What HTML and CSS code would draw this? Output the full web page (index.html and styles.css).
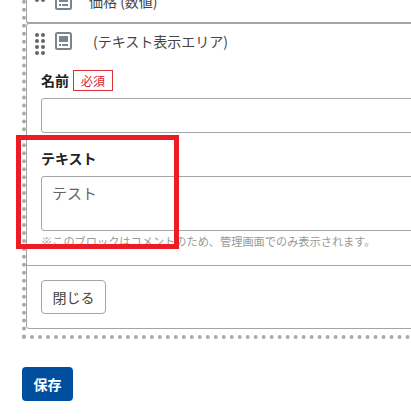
FILE: index.html
```html
<!DOCTYPE html>
<html lang="ja">
<head>
<meta charset="utf-8">
<title>ブロック編集</title>
<link rel="stylesheet" href="styles.css">
</head>
<body>
<div class="page">
  <div class="area">
    <div class="card card-first">
      <div class="head">
        <svg class="grip" width="10" height="18" viewBox="0 0 10 18"><g fill="#666"><circle cx="2" cy="2" r="2"/><circle cx="8" cy="2" r="2"/><circle cx="2" cy="8" r="2"/><circle cx="8" cy="8" r="2"/></g></svg>
        <svg class="ico" width="17" height="18" viewBox="0 0 17 18"><rect x="1" y="1" width="15" height="16" rx="1.5" fill="none" stroke="#7b8590" stroke-width="2"/><rect x="4" y="4" width="9" height="6" fill="#7b8590"/><rect x="4" y="12" width="2" height="2" fill="#7b8590"/><rect x="7" y="12" width="6" height="2" fill="#7b8590"/></svg>
        <span class="title">価格 (数値)</span>
      </div>
    </div>
    <div class="card card-open">
      <div class="head">
        <svg class="grip" width="10" height="24" viewBox="0 0 10 24"><g fill="#666"><circle cx="2" cy="3" r="2"/><circle cx="8" cy="3" r="2"/><circle cx="2" cy="9" r="2"/><circle cx="8" cy="9" r="2"/><circle cx="2" cy="15" r="2"/><circle cx="8" cy="15" r="2"/><circle cx="2" cy="21" r="2"/><circle cx="8" cy="21" r="2"/></g></svg>
        <svg class="ico" width="17" height="18" viewBox="0 0 17 18"><rect x="1" y="1" width="15" height="16" rx="1.5" fill="none" stroke="#7b8590" stroke-width="2"/><rect x="4" y="4" width="9" height="6" fill="#7b8590"/><rect x="4" y="12" width="2" height="2" fill="#7b8590"/><rect x="7" y="12" width="6" height="2" fill="#7b8590"/></svg>
        <span class="title">(テキスト表示エリア)</span>
      </div>
      <div class="body">
        <div class="label-row"><span class="label">名前</span><span class="badge">必須</span></div>
        <div class="field field-input"></div>
        <div class="label label-text">テキスト</div>
        <div class="field field-area">テスト</div>
        <p class="note">※このブロックはコメントのため、管理画面でのみ表示されます。</p>
      </div>
      <div class="foot"><span class="btn">閉じる</span></div>
    </div>
  </div>
  <div class="actions"><span class="save">保存</span></div>
  <div class="mark"></div>
</div>
</body>
</html>
```
FILE: styles.css
```css
* { box-sizing: border-box; }
html, body { margin: 0; padding: 0; background: #fff; }
body { font-family: "Noto Sans CJK JP", "Noto Sans", sans-serif; color: #333; }
.page { position: relative; width: 411px; height: 419px; overflow: hidden; }
.area { width: 620px; margin-left: 22px; margin-top: -32px; border-left: 4px dotted #aaa; border-bottom: 4px dotted #aaa; padding-bottom: 6px; }
.card { border: 1px solid #a5a5a5; border-radius: 3px; background: #fff; }
.card-first { height: 56px; border-bottom-width: 2px; }
.card-first .head { padding-top: 23px; }
.card-open { margin-top: -1px; height: 306px; }
.head { display: flex; align-items: flex-start; padding: 8px 0 0 8px; }
.grip { flex: none; margin-right: 10px; }
.ico { flex: none; margin-right: 21px; }
.title { font-size: 14px; line-height: 20px; color: #444; margin-top: -1px; }
.card-first .title { margin-left: -4px; }
.body { padding: 14px 0 0 14px; }
.label-row { display: flex; align-items: center; height: 21px; gap: 4px; }
.label { font-size: 14px; font-weight: 700; line-height: 21px; color: #222; }
.badge { width: 40px; height: 21px; border: 1px solid #d9303a; font-size: 12px; line-height: 19px; text-align: center; color: #e0202c; }
.field { border: 1px solid #a5a5a5; border-radius: 3px; background: #fff; width: 560px; }
.field-input { height: 35px; margin-top: 7px; }
.label-text { margin-top: 15px; line-height: 21px; }
.field-area { height: 55px; margin-top: 7px; padding: 5px 10px; font-size: 15px; line-height: 21px; color: #666; }
.note { margin: 2px 0 0; font-size: 11.2px; line-height: 17px; color: #999; }
.foot { margin-top: 15px; border-top: 1px solid #a5a5a5; padding: 14px 0 0 14px; }
.btn { display: block; width: 65px; height: 34px; border: 1px solid #a5a5a5; border-radius: 4px; font-size: 14px; line-height: 32px; text-align: center; color: #444; }
.actions { margin: 28px 0 0 22px; }
.save { display: block; width: 51px; height: 34px; border-radius: 4px; background: #004f9f; color: #fff; font-size: 14px; font-weight: 700; line-height: 34px; text-align: center; }
.mark { position: absolute; left: 16px; top: 135px; width: 163px; height: 114px; border: 5px solid #ed1c24; }
```
